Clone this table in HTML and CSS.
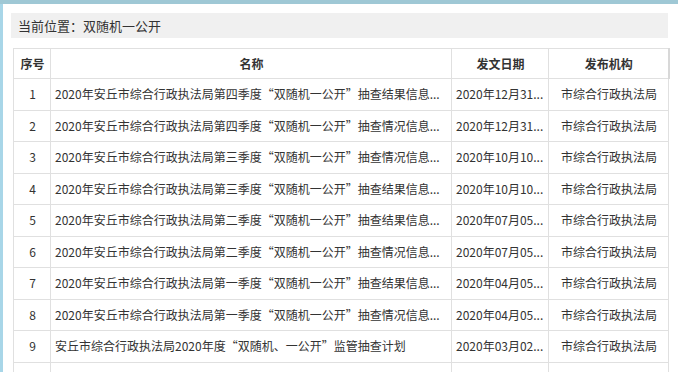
FILE: index.html
```html
<!DOCTYPE html>
<html lang="zh-CN">
<head>
<meta charset="utf-8">
<title>双随机一公开</title>
<link rel="stylesheet" href="styles.css">
</head>
<body>
<div class="page">
  <div class="crumb">当前位置：双随机一公开</div>
  <table class="tbl">
    <colgroup>
      <col class="c-no"><col class="c-name"><col class="c-date"><col class="c-org">
    </colgroup>
    <thead>
      <tr><th>序号</th><th>名称</th><th>发文日期</th><th class="last">发布机构</th></tr>
    </thead>
    <tbody>
      <tr><td class="no">1</td><td class="name">2020年安丘市综合行政执法局第四季度“双随机一公开”抽查结果信息...</td><td class="date">2020年12月31...</td><td class="org">市综合行政执法局</td></tr>
      <tr><td class="no">2</td><td class="name">2020年安丘市综合行政执法局第四季度“双随机一公开”抽查情况信息...</td><td class="date">2020年12月31...</td><td class="org">市综合行政执法局</td></tr>
      <tr><td class="no">3</td><td class="name">2020年安丘市综合行政执法局第三季度“双随机一公开”抽查情况信息...</td><td class="date">2020年10月10...</td><td class="org">市综合行政执法局</td></tr>
      <tr><td class="no">4</td><td class="name">2020年安丘市综合行政执法局第三季度“双随机一公开”抽查结果信息...</td><td class="date">2020年10月10...</td><td class="org">市综合行政执法局</td></tr>
      <tr><td class="no">5</td><td class="name">2020年安丘市综合行政执法局第二季度“双随机一公开”抽查结果信息...</td><td class="date">2020年07月05...</td><td class="org">市综合行政执法局</td></tr>
      <tr><td class="no">6</td><td class="name">2020年安丘市综合行政执法局第二季度“双随机一公开”抽查情况信息...</td><td class="date">2020年07月05...</td><td class="org">市综合行政执法局</td></tr>
      <tr><td class="no">7</td><td class="name">2020年安丘市综合行政执法局第一季度“双随机一公开”抽查结果信息...</td><td class="date">2020年04月05...</td><td class="org">市综合行政执法局</td></tr>
      <tr><td class="no">8</td><td class="name">2020年安丘市综合行政执法局第一季度“双随机一公开”抽查情况信息...</td><td class="date">2020年04月05...</td><td class="org">市综合行政执法局</td></tr>
      <tr><td class="no">9</td><td class="name">安丘市综合行政执法局2020年度“双随机、一公开”监管抽查计划</td><td class="date">2020年03月02...</td><td class="org">市综合行政执法局</td></tr>
      <tr><td class="no">&nbsp;</td><td class="name">&nbsp;</td><td class="date">&nbsp;</td><td class="org">&nbsp;</td></tr>
    </tbody>
  </table>
</div>
</body>
</html>
```

FILE: styles.css
```css
html, body {
  margin: 0;
  padding: 0;
}
body {
  background: #a8d6e8;
  border-top: 4px solid #9fc8d5;
  font-family: "Microsoft YaHei", "Noto Sans CJK SC", "Noto Sans", sans-serif;
  color: #333;
  height: 368px;
  overflow: hidden;
}
.page {
  margin-left: 3px;
  background: #fff;
  height: 100%;
  padding: 9px 0 0 8px;
  box-sizing: border-box;
}
.crumb {
  width: 657px;
  height: 25px;
  background: #f0f0f0;
  font-size: 13px;
  line-height: 25px;
  padding-left: 7px;
  box-sizing: border-box;
  color: #333;
}
.tbl {
  margin: 10px 0 0 2px;
  width: 655px;
  border-collapse: collapse;
  table-layout: fixed;
  font-size: 12px;
  line-height: 16px;
}
.c-no { width: 37px; }
.c-name { width: 401px; }
.c-date { width: 97px; }
.c-org { width: 120px; }
.tbl th, .tbl td {
  border: 1px solid #e0e0e0;
  padding: 0 3px 0 4px;
  overflow: hidden;
  white-space: nowrap;
}
.tbl th {
  height: 29px;
  font-weight: bold;
  text-align: center;
  color: #333;
}
.tbl th.last {
  border-right: 2px solid #d8d8d8;
}
.tbl td {
  height: 30.5px;
  color: #333;
}
.tbl td.no, .tbl td.org {
  text-align: center;
}
```
